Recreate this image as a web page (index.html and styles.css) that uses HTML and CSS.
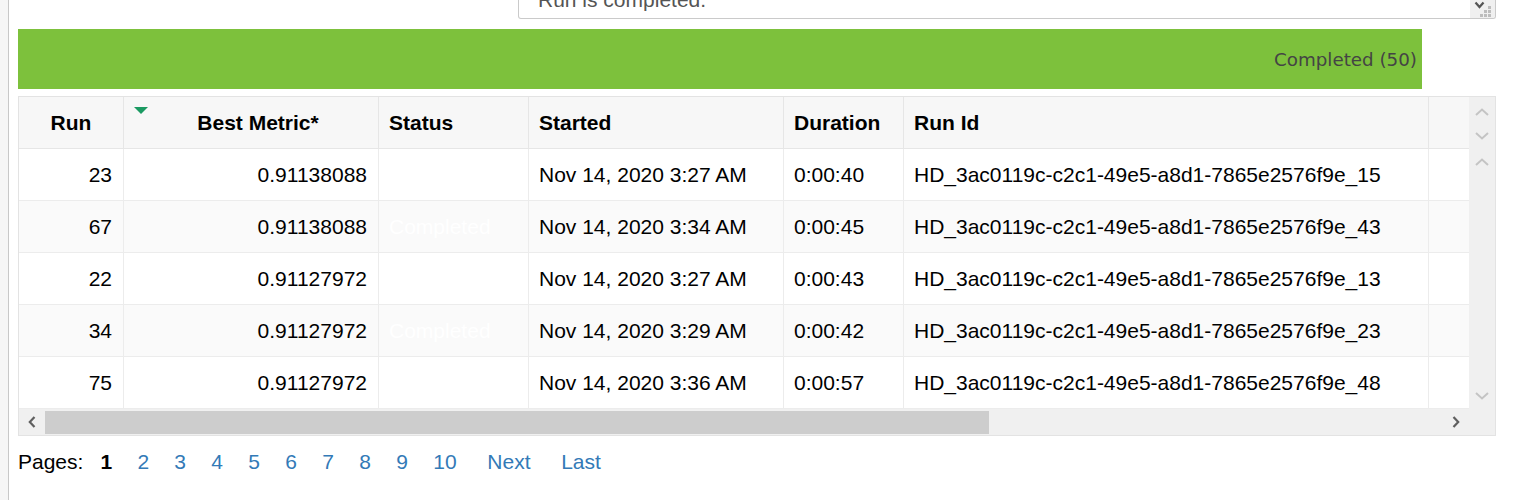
FILE: index.html
```html
<!DOCTYPE html>
<html>
<head>
<meta charset="utf-8">
<link rel="stylesheet" href="styles.css">
</head>
<body>
<div class="page">
  <div class="gutter"></div>
  <main class="main">
    <div class="notes">
      <span class="notes-text">Run is completed.</span>
      <div class="notes-scroll">
        <svg width="25" height="18" viewBox="0 0 25 18">
          <polyline points="5.5,2.5 9.5,7 13.5,2.5" fill="none" stroke="#555" stroke-width="2.2"/>
          <rect x="18" y="6" width="3" height="3" fill="#bdbdbd"/>
          <rect x="14" y="10" width="3" height="3" fill="#bdbdbd"/>
          <rect x="18" y="10" width="3" height="3" fill="#bdbdbd"/>
          <rect x="10" y="14" width="3" height="3" fill="#bdbdbd"/>
          <rect x="14" y="14" width="3" height="3" fill="#bdbdbd"/>
          <rect x="18" y="14" width="3" height="3" fill="#bdbdbd"/>
        </svg>
      </div>
    </div>

    <div class="progress"><span>Completed (50)</span></div>

    <div class="grid-box">
      <div class="grid-main">
        <div class="grid">
          <div class="row head">
            <div class="cell hd center">Run</div>
            <div class="cell hd center metric-hd"><span class="sort-arrow"></span>Best Metric*</div>
            <div class="cell hd">Status</div>
            <div class="cell hd">Started</div>
            <div class="cell hd">Duration</div>
            <div class="cell hd">Run Id</div>
            <div class="cell hd filler"></div>
          </div>
          <div class="row">
            <div class="cell num">23</div>
            <div class="cell num">0.91138088</div>
            <div class="cell status">Completed</div>
            <div class="cell">Nov 14, 2020 3:27 AM</div>
            <div class="cell">0:00:40</div>
            <div class="cell">HD_3ac0119c-c2c1-49e5-a8d1-7865e2576f9e_15</div>
            <div class="cell filler"></div>
          </div>
          <div class="row alt">
            <div class="cell num">67</div>
            <div class="cell num">0.91138088</div>
            <div class="cell status">Completed</div>
            <div class="cell">Nov 14, 2020 3:34 AM</div>
            <div class="cell">0:00:45</div>
            <div class="cell">HD_3ac0119c-c2c1-49e5-a8d1-7865e2576f9e_43</div>
            <div class="cell filler"></div>
          </div>
          <div class="row">
            <div class="cell num">22</div>
            <div class="cell num">0.91127972</div>
            <div class="cell status">Completed</div>
            <div class="cell">Nov 14, 2020 3:27 AM</div>
            <div class="cell">0:00:43</div>
            <div class="cell">HD_3ac0119c-c2c1-49e5-a8d1-7865e2576f9e_13</div>
            <div class="cell filler"></div>
          </div>
          <div class="row alt">
            <div class="cell num">34</div>
            <div class="cell num">0.91127972</div>
            <div class="cell status">Completed</div>
            <div class="cell">Nov 14, 2020 3:29 AM</div>
            <div class="cell">0:00:42</div>
            <div class="cell">HD_3ac0119c-c2c1-49e5-a8d1-7865e2576f9e_23</div>
            <div class="cell filler"></div>
          </div>
          <div class="row">
            <div class="cell num">75</div>
            <div class="cell num">0.91127972</div>
            <div class="cell status">Completed</div>
            <div class="cell">Nov 14, 2020 3:36 AM</div>
            <div class="cell">0:00:57</div>
            <div class="cell">HD_3ac0119c-c2c1-49e5-a8d1-7865e2576f9e_48</div>
            <div class="cell filler"></div>
          </div>
        </div>
        <div class="hscroll">
          <div class="hs-btn">
            <svg width="8" height="12" viewBox="0 0 8 12"><polyline points="6.5,1 1.8,6 6.5,11" fill="none" stroke="#5f5f5f" stroke-width="2.2"/></svg>
          </div>
          <div class="hs-thumb"></div>
          <div class="hs-space"></div>
          <div class="hs-btn">
            <svg width="8" height="12" viewBox="0 0 8 12"><polyline points="1.5,1 6.2,6 1.5,11" fill="none" stroke="#5f5f5f" stroke-width="2.2"/></svg>
          </div>
        </div>
      </div>
      <div class="vscroll">
        <svg class="vs-a" width="14" height="8" viewBox="0 0 14 8"><polyline points="1,7 7,1.5 13,7" fill="none" stroke="#c4c4c4" stroke-width="2"/></svg>
        <svg class="vs-b" width="14" height="8" viewBox="0 0 14 8"><polyline points="1,1 7,6.5 13,1" fill="none" stroke="#c4c4c4" stroke-width="2"/></svg>
        <svg class="vs-c" width="14" height="8" viewBox="0 0 14 8"><polyline points="1,7 7,1.5 13,7" fill="none" stroke="#c4c4c4" stroke-width="2"/></svg>
        <svg class="vs-d" width="14" height="8" viewBox="0 0 14 8"><polyline points="1,1 7,6.5 13,1" fill="none" stroke="#c4c4c4" stroke-width="2"/></svg>
      </div>
    </div>

    <div class="pager">
      <span class="pager-label">Pages:</span>
      <nav class="pages">
        <span class="pg current">1</span>
        <a class="pg">2</a>
        <a class="pg">3</a>
        <a class="pg">4</a>
        <a class="pg">5</a>
        <a class="pg">6</a>
        <a class="pg">7</a>
        <a class="pg">8</a>
        <a class="pg">9</a>
        <a class="pg">10</a>
        <a class="pg word">Next</a>
        <a class="pg word">Last</a>
      </nav>
    </div>
  </main>
</div>
</body>
</html>
```

FILE: styles.css
```css
* { box-sizing: border-box; }

html, body {
  margin: 0;
  padding: 0;
  background: #fff;
}

body {
  font-family: "Liberation Sans", Arial, sans-serif;
  color: #000;
}

.page {
  display: flex;
  width: 1528px;
  height: 500px;
  overflow: hidden;
}

.gutter {
  width: 9px;
  flex: none;
  background: #f6f6f6;
  border-right: 1px solid #c8c8c8;
}

.main {
  flex: 1;
  padding-left: 9px;
}

/* top notes box (scrolled textarea) */
.notes {
  margin-left: 500px;
  width: 978px;
  height: 19px;
  border: 1px solid #cacaca;
  border-top: 0;
  border-radius: 0 0 3px 3px;
  display: flex;
  overflow: hidden;
}

.notes-text {
  flex: 1;
  padding-left: 19px;
  margin-top: -11px;
  font-size: 21px;
  line-height: 21px;
  color: #555;
  white-space: nowrap;
}

.notes-scroll {
  width: 25px;
  flex: none;
  background: #f0f0f0;
  display: flex;
}

/* green progress bar */
.progress {
  margin-top: 10px;
  width: 1404px;
  height: 60px;
  background: #7dc13c;
  display: flex;
  align-items: center;
  justify-content: flex-end;
  padding-right: 5px;
  font-family: "DejaVu Sans", Verdana, sans-serif;
  font-size: 18.3px;
  color: #444;
}

/* grid */
.grid-box {
  margin-top: 7px;
  width: 1478px;
  border: 1px solid #e3e3e3;
  display: flex;
}

.grid-main {
  width: 1450px;
  flex: none;
}

.grid {
  display: grid;
  grid-template-columns: 105px 255px 150px 255px 120px 525px 40px;
  grid-auto-rows: 52px;
}

.row { display: contents; }

.cell {
  display: flex;
  align-items: center;
  padding: 0 10px;
  border-right: 1px solid #ececec;
  border-bottom: 1px solid #ececec;
  font-size: 21px;
  white-space: nowrap;
  overflow: hidden;
  background: #fff;
}

.row.alt > .cell { background: #fafafa; }

.cell.hd {
  background: #f7f7f7;
  font-weight: bold;
  border-bottom-color: #e6e6e6;
  border-right-color: #e6e6e6;
}

.cell.center { justify-content: center; }

.metric-hd {
  position: relative;
  padding-left: 24px;
}

.sort-arrow {
  position: absolute;
  left: 10px;
  top: 10px;
  width: 0;
  height: 0;
  border-left: 7px solid transparent;
  border-right: 7px solid transparent;
  border-top: 7px solid #1b9a62;
}

.cell.num {
  justify-content: flex-end;
  padding-right: 11px;
}

.cell.status { color: #fff; }

.cell.filler { border-right: 0; }

/* horizontal scrollbar */
.hscroll {
  height: 26px;
  background: #f0f0f0;
  display: flex;
  align-items: center;
}

.hs-btn {
  width: 26px;
  height: 26px;
  flex: none;
  display: flex;
  align-items: center;
  justify-content: center;
}

.hs-thumb {
  width: 944px;
  height: 23px;
  flex: none;
  background: #cdcdcd;
}

.hs-space { flex: 1; }

/* vertical scrollbar */
.vscroll {
  width: 26px;
  flex: none;
  background: #f0f0f0;
  display: flex;
  flex-direction: column;
  align-items: center;
  padding-top: 11px;
}

.vs-b { margin-top: 16px; }
.vs-c { margin-top: 18px; }
.vs-d { margin-top: auto; margin-bottom: 35px; }

/* pager */
.pager {
  margin-top: 14px;
  display: flex;
  align-items: center;
  font-size: 21px;
  line-height: 24px;
}

.pager-label { margin-right: 17px; }

.pages {
  display: flex;
  gap: 25.3px;
}

.pg {
  color: #337ab7;
  text-decoration: none;
}

.pg.current {
  color: #000;
  font-weight: bold;
}

.pg.word { margin-left: 5.4px; }
```
